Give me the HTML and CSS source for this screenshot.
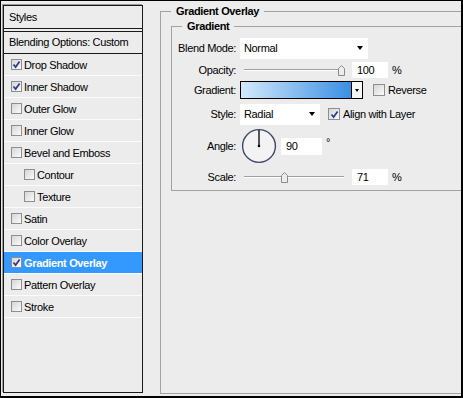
FILE: index.html
```html
<!DOCTYPE html>
<html>
<head>
<meta charset="utf-8">
<link rel="stylesheet" href="styles.css">
</head>
<body>
<div class="dialog">
  <aside class="styles-panel">
    <div class="panel-title">Styles</div>
    <div class="panel-blend">Blending Options: Custom</div>
    <ul class="fx-list">
      <li class="fx"><span class="cb"><svg viewBox="0 0 9 9"><path d="M1.5 4.5 L3.6 7 L7.6 1.4"/></svg></span>Drop Shadow</li>
      <li class="fx"><span class="cb"><svg viewBox="0 0 9 9"><path d="M1.5 4.5 L3.6 7 L7.6 1.4"/></svg></span>Inner Shadow</li>
      <li class="fx"><span class="cb"></span>Outer Glow</li>
      <li class="fx"><span class="cb"></span>Inner Glow</li>
      <li class="fx"><span class="cb"></span>Bevel and Emboss</li>
      <li class="fx sub"><span class="cb"></span>Contour</li>
      <li class="fx sub"><span class="cb"></span>Texture</li>
      <li class="fx"><span class="cb"></span>Satin</li>
      <li class="fx"><span class="cb"></span>Color Overlay</li>
      <li class="fx active"><span class="cb"><svg viewBox="0 0 9 9"><path d="M1.5 4.5 L3.6 7 L7.6 1.4"/></svg></span>Gradient Overlay</li>
      <li class="fx"><span class="cb"></span>Pattern Overlay</li>
      <li class="fx"><span class="cb"></span>Stroke</li>
    </ul>
  </aside>
  <main class="settings">
    <fieldset class="group outer">
      <legend>Gradient Overlay</legend>
      <fieldset class="group inner">
        <legend>Gradient</legend>
        <div class="form">
          <label class="lbl">Blend Mode:</label>
          <div class="ctl">
            <div class="select wide"><span>Normal</span><span class="arrow"></span></div>
          </div>

          <label class="lbl">Opacity:</label>
          <div class="ctl">
            <div class="slider"><div class="track"></div><span class="thumb" style="left:98px"><svg viewBox="0 0 7 11"><path d="M0.5 3.5 L3.5 0.5 L6.5 3.5 V10.5 H0.5 Z"/></svg></span></div>
            <div class="num">100</div><span class="unit">%</span>
          </div>

          <label class="lbl">Gradient:</label>
          <div class="ctl">
            <div class="grad"></div><div class="grad-btn"><span class="arrow small"></span></div>
            <span class="cb gap-rev"></span><span class="cb-text">Reverse</span>
          </div>

          <label class="lbl">Style:</label>
          <div class="ctl">
            <div class="select narrow"><span>Radial</span><span class="arrow"></span></div>
            <span class="cb gap-align"><svg viewBox="0 0 9 9"><path d="M1.5 4.5 L3.6 7 L7.6 1.4"/></svg></span><span class="cb-text">Align with Layer</span>
          </div>

          <label class="lbl">Angle:</label>
          <div class="ctl">
            <svg class="dial" viewBox="0 0 36 36"><circle cx="18" cy="18" r="16.4" class="ring"/><line x1="18" y1="18" x2="18" y2="2" class="hand"/><circle cx="18" cy="18" r="1.3" class="dot"/></svg>
            <div class="num angle">90</div><span class="deg">°</span>
          </div>

          <label class="lbl">Scale:</label>
          <div class="ctl">
            <div class="slider"><div class="track"></div><span class="thumb" style="left:41px"><svg viewBox="0 0 7 11"><path d="M0.5 3.5 L3.5 0.5 L6.5 3.5 V10.5 H0.5 Z"/></svg></span></div>
            <div class="num">71</div><span class="unit">%</span>
          </div>
        </div>
      </fieldset>
    </fieldset>
  </main>
</div>
</body>
</html>
```

FILE: styles.css
```css
* { box-sizing: border-box; }
html, body { margin: 0; padding: 0; background: #fff; }
body {
  font-family: "Liberation Sans", Arial, sans-serif;
  font-size: 11px;
  letter-spacing: -0.35px;
  color: #000;
}
.dialog {
  width: 463px;
  height: 398px;
  border: 1px solid #000;
  border-right-width: 2px;
  border-bottom-width: 2px;
  background: #ececec;
  display: flex;
  align-items: flex-start;
  padding: 4px 0 2px 2px;
  overflow: hidden;
}
.styles-panel {
  width: 140px;
  height: 388px;
  flex: none;
  border: 1px solid #1a1a1a;
  box-shadow: -1px -1px 0 #9a9a9a;
  display: flex;
  flex-direction: column;
}
.panel-title {
  height: 26px;
  line-height: 22px;
  padding-left: 5px;
  border-bottom: 4px double #1a1a1a;
}
.panel-blend {
  height: 22px;
  line-height: 21px;
  padding-left: 5px;
  border-bottom: 1px solid #1a1a1a;
}
.fx-list { list-style: none; margin: 0; padding: 0; }
.fx {
  height: 22px;
  border-bottom: 1px solid #fbfbfb;
  display: flex;
  align-items: center;
  gap: 2px;
  padding-left: 7px;
}
.fx.sub { padding-left: 20px; }
.fx.active { background: #3399ff; color: #fff; font-weight: bold; }
.cb {
  width: 11px;
  height: 11px;
  flex: none;
  border: 1px solid #8c8e90;
  background: linear-gradient(135deg, #d6d6d6, #fbfbfb);
  display: flex;
  align-items: center;
  justify-content: center;
}
.cb svg { width: 9px; height: 9px; display: block; }
.cb path { fill: none; stroke: #2a3a8c; stroke-width: 1.7; }

.settings {
  flex: 1;
  margin-left: 17px;
  height: 389px;
  display: flex;
}
.group {
  margin: 0;
  min-width: 0;
  border: 1px solid #a2a2a2;
  border-right: none;
}
.group > legend {
  padding: 0 5px;
  line-height: 13px;
  font-weight: bold;
}
.outer {
  flex: 1;
  padding: 0 0 0 10px;
}
.inner {
  margin-top: 2px;
  padding: 4px 0 0 0;
}
.inner > legend { margin-left: 10px; }
.form {
  display: grid;
  grid-template-columns: 64px 1fr;
  grid-template-rows: 22px 21px 20px 28px 36px 26px;
  column-gap: 4px;
}
.lbl { text-align: right; align-self: center; }
.ctl { display: flex; align-items: center; }
.select {
  height: 21px;
  background: #fff;
  display: flex;
  align-items: center;
  justify-content: space-between;
  padding: 0 5px 0 4px;
}
.select.wide { width: 128px; }
.select.narrow { width: 80px; }
.arrow {
  width: 0; height: 0;
  border-left: 3.5px solid transparent;
  border-right: 3.5px solid transparent;
  border-top: 4px solid #000;
}
.arrow.small {
  border-left-width: 2.5px;
  border-right-width: 2.5px;
  border-top-width: 3px;
}
.slider {
  width: 108px;
  height: 14px;
  padding: 0 4px;
  position: relative;
  display: flex;
  align-items: center;
}
.track {
  flex: 1;
  height: 2px;
  border-top: 1px solid #a0a0a0;
  border-bottom: 1px solid #fff;
}
.thumb { position: absolute; top: 2px; width: 7px; height: 11px; }
.thumb svg { width: 7px; height: 11px; display: block; }
.thumb path { fill: #ececec; stroke: #8a8a8a; stroke-width: 1; }
.num {
  width: 36px;
  height: 16px;
  line-height: 16px;
  background: #fff;
  margin-left: 4px;
  padding-left: 5px;
}
.num.angle { width: 41px; height: 17px; margin-left: 4px; }
.unit { margin-left: 4px; }
.deg { margin-left: 4px; align-self: flex-start; margin-top: 8px; }
.grad {
  width: 112px;
  height: 18px;
  border: 1px solid #000;
  background: linear-gradient(to right, #d3e9fb, #3a8fe3);
}
.grad-btn {
  width: 11px;
  height: 18px;
  border: 1px solid #000;
  border-left: none;
  background: #f6f6f6;
  display: flex;
  align-items: center;
  justify-content: center;
}
.gap-rev { margin-left: 10px; width: 12px; height: 12px; }
.gap-align { margin-left: 8px; width: 12px; height: 12px; }
.cb-text { margin-left: 3px; }
.dial { width: 36px; height: 36px; margin-left: 1px; display: block; }
.ring { fill: #f3f3f5; stroke: #3f4a68; stroke-width: 1.4; }
.hand { stroke: #000; stroke-width: 1.3; }
.dot { fill: #000; }
```
